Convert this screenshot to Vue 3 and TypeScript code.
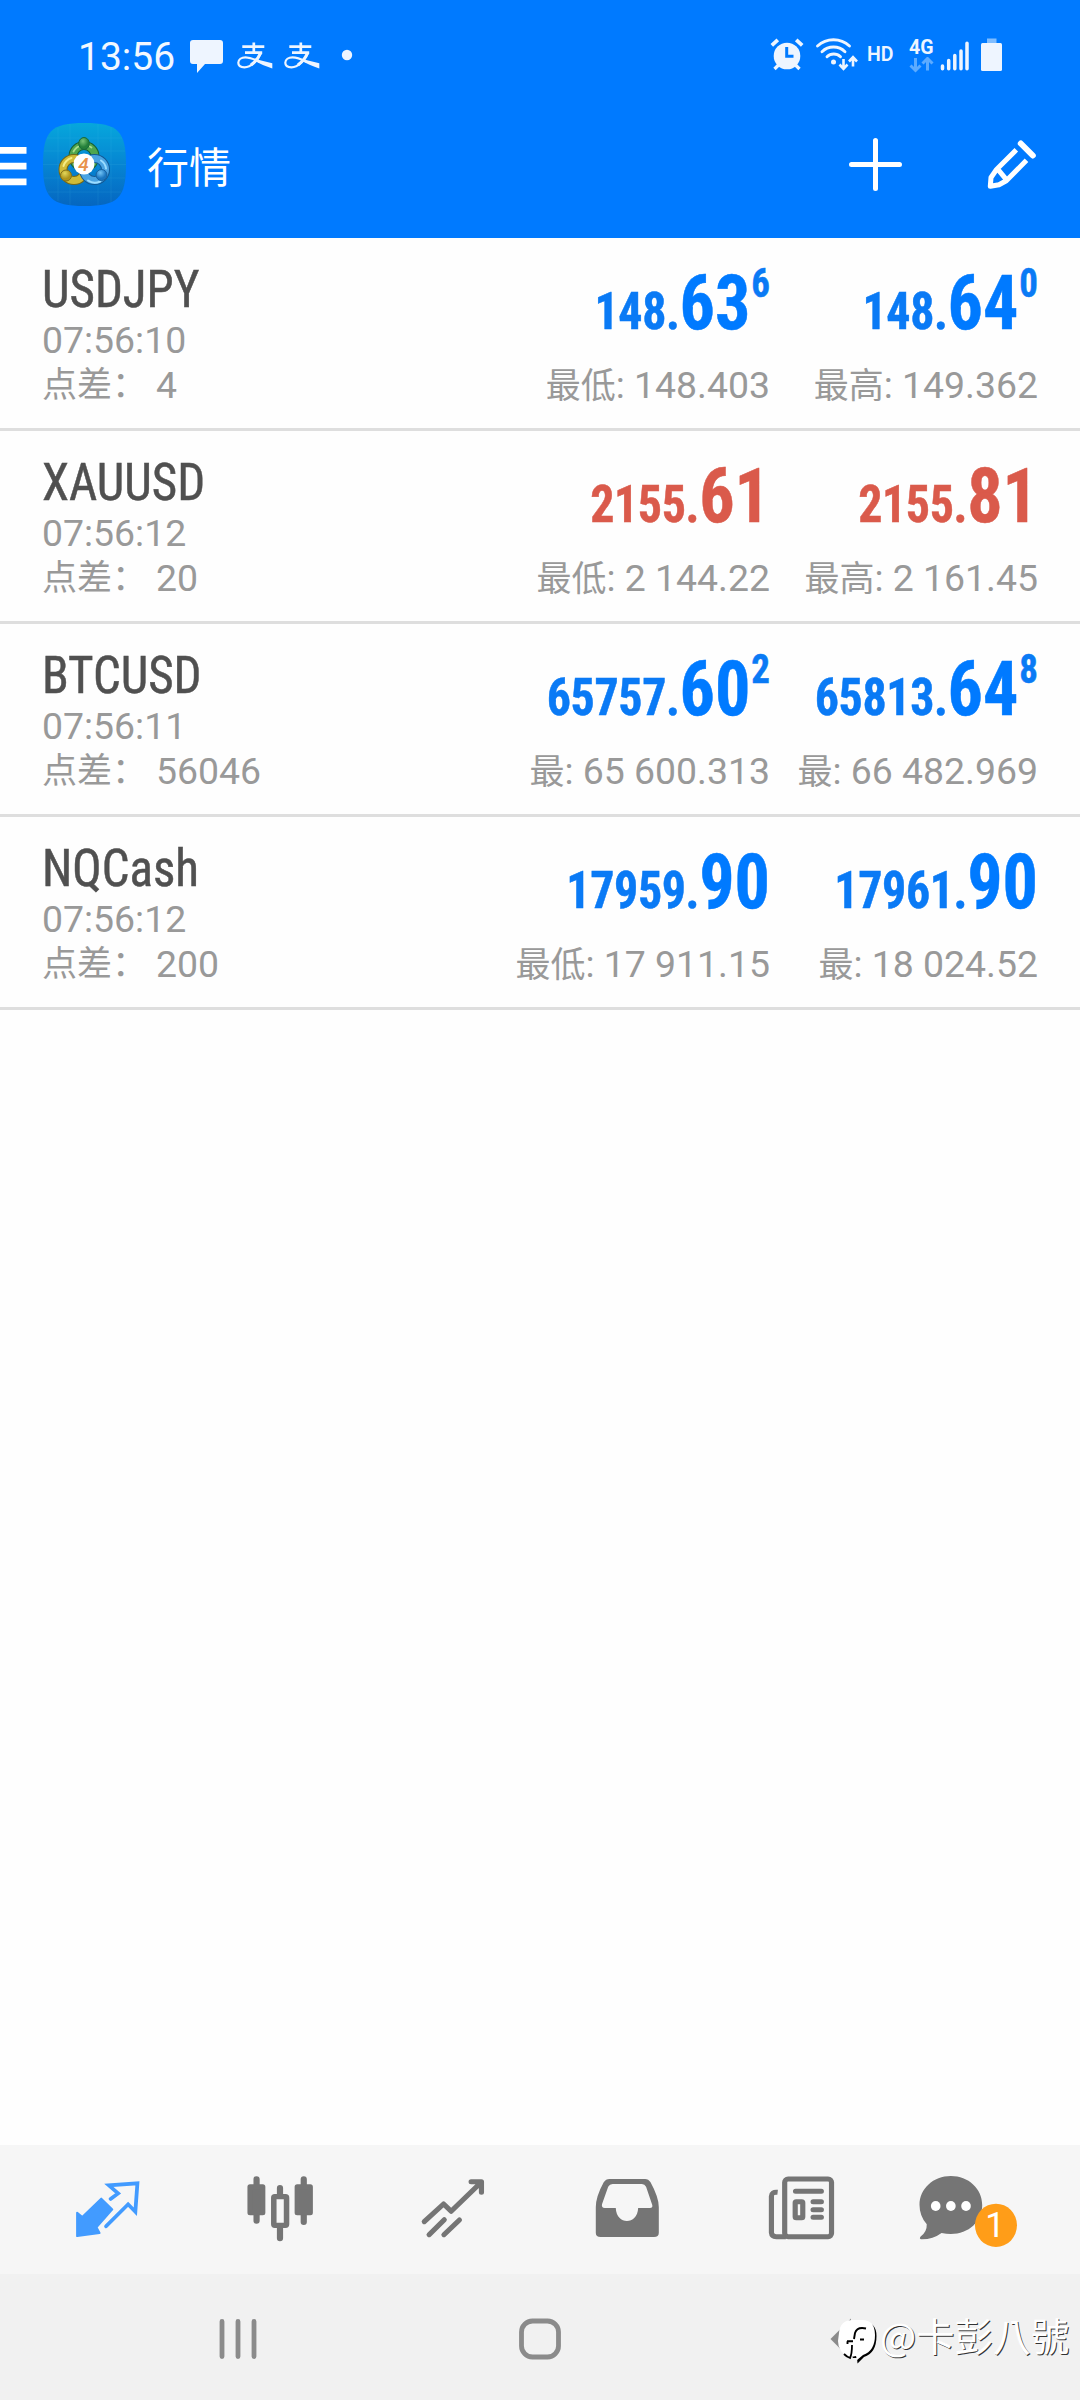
<script setup lang="ts">
interface Price {
  small: string
  big: string
  sup: string
  label: string
  extreme: string
}
interface Quote {
  symbol: string
  time: string
  spread: string
  trend: 'up' | 'down'
  prices: Price[]
}

const quotes: Quote[] = [
  {
    symbol: 'USDJPY', time: '07:56:10', spread: '4', trend: 'up',
    prices: [
      { small: '148.', big: '63', sup: '6', label: '最低', extreme: '148.403' },
      { small: '148.', big: '64', sup: '0', label: '最高', extreme: '149.362' },
    ],
  },
  {
    symbol: 'XAUUSD', time: '07:56:12', spread: '20', trend: 'down',
    prices: [
      { small: '2155.', big: '61', sup: '', label: '最低', extreme: '2 144.22' },
      { small: '2155.', big: '81', sup: '', label: '最高', extreme: '2 161.45' },
    ],
  },
  {
    symbol: 'BTCUSD', time: '07:56:11', spread: '56046', trend: 'up',
    prices: [
      { small: '65757.', big: '60', sup: '2', label: '最', extreme: '65 600.313' },
      { small: '65813.', big: '64', sup: '8', label: '最', extreme: '66 482.969' },
    ],
  },
  {
    symbol: 'NQCash', time: '07:56:12', spread: '200', trend: 'up',
    prices: [
      { small: '17959.', big: '90', sup: '', label: '最低', extreme: '17 911.15' },
      { small: '17961.', big: '90', sup: '', label: '最', extreme: '18 024.52' },
    ],
  },
]
</script>

<template>
  <div class="screen">
    <header>
      <div class="status">
        <div class="side">
          <span class="clock">13:56</span>
          <svg width="166" height="110" viewBox="188 0 166 110">
            <g fill="#eef5ff">
              <path d="M193 40h27q3 0 3 3v18q0 3-3 3h-15l-8 9v-9h-4q-3 0-3-3V43q0-3 3-3z" />
              <circle cx="347" cy="55" r="5.2" />
            </g>
            <g v-for="dx in [0, 47]" :key="dx" :transform="`translate(${dx} 0)`" fill="none" stroke="#eef5ff">
              <path d="M253.8 42.5v10.500M242.300 46.700h22M245 52.700h17.200" stroke-width="2.700" />
              <path d="M261 52.800C258 60 251 67.300 244.500 67.300C240 67.300 238.300 65 238.300 62.800C238.300 59.500 241.500 57.300 245.500 57.300C251 57.300 255 59.500 260 62" stroke-width="2.200" />
              <path d="M260.300 53.500C258.500 58 255 62 251 65" stroke-width="3.200" />
              <path d="M254 58.800L272.300 63.300V68.600C266 66.500 259 63.500 253.500 60z" fill="#eef5ff" stroke="none" />
            </g>
          </svg>
        </div>
        <div class="side">
          <svg width="92" height="110" viewBox="769 0 92 110" fill="none" stroke="#eef5ff">
            <circle cx="787" cy="56" r="13.300" fill="#eef5ff" stroke="none" />
            <path d="M771.800 45.300l6-5.500M802.200 45.300l-6-5.500" stroke-width="3.800" />
            <path d="M774.500 69l5-5M799.500 69l-5-5" stroke-width="3.300" />
            <path d="M786.700 47v9.300h6.800" stroke="#007aff" stroke-width="3" />
            <g stroke-width="2.900" stroke-linecap="round">
              <path d="M817.500 46a23.500 23.500 0 0 1 32 0M822 51.700a16.500 16.500 0 0 1 23 0M827 56.800a9.500 9.500 0 0 1 13.500 0" />
            </g>
            <circle cx="833.500" cy="62" r="2.500" fill="#eef5ff" stroke="none" />
            <path d="M843.500 59v9.500M839.500 64.500l4 4.300 4-4.300M853 66.500v-9M849 61.500l4-4.300 4 4.300" stroke-width="2.600" />
          </svg>
          <span class="hd">HD</span>
          <div class="network">
            <span>4G</span>
            <svg width="26" height="16" viewBox="908 57 26 16" fill="none" stroke="#5cabff" stroke-width="3">
              <path d="M915.500 58v12M910.500 65.500l5 5 5-5M927.500 70.500v-12M922.500 63.500l5-5 5 5" />
            </svg>
          </div>
          <svg width="66" height="110" viewBox="938 0 66 110">
            <path d="M942.500 66v2.700M948.700 60.500v8.200M954.800 55.500v13.200M961 51v17.700M967 43.200v25.500" stroke="#eef5ff" stroke-width="3.500" stroke-linecap="round" />
            <rect x="987" y="38.500" width="9.500" height="5" fill="#80bdff" />
            <rect x="981" y="43" width="21" height="28" rx="1.500" fill="#eef5ff" />
          </svg>
        </div>
      </div>
      <div class="appbar">
        <div class="side">
          <svg width="130" height="128" viewBox="0 110 130 128">
            <defs>
              <linearGradient id="tile" x1="0" y1="0" x2="0" y2="1">
                <stop offset="0" stop-color="#06a7dc" />
                <stop offset=".5" stop-color="#0685d2" />
                <stop offset="1" stop-color="#0566c0" />
              </linearGradient>
              <radialGradient id="green" cx=".4" cy=".3"><stop offset="0" stop-color="#79c477" /><stop offset="1" stop-color="#24803a" /></radialGradient>
              <radialGradient id="gold" cx=".4" cy=".3"><stop offset="0" stop-color="#e3d75a" /><stop offset="1" stop-color="#ad941d" /></radialGradient>
              <radialGradient id="sky" cx=".4" cy=".3"><stop offset="0" stop-color="#72c3f5" /><stop offset="1" stop-color="#1b76c0" /></radialGradient>
            </defs>
            <path d="M0 150.300h26.500M0 166.200h26.500M0 181.800h26.500" stroke="#fff" stroke-width="6.700" />
            <path d="M84.500 123C118 123 126 131 126 164.500S118 206 84.500 206S43 198 43 164.500S51 123 84.500 123z" fill="url(#tile)" />
            <path d="M58 128v73M70 124v81M98 124v81M111 127v75M47 138h75M44 151h81M43 164.500h83M44 178h81M48 192h73" stroke="#5fd0ee" stroke-width=".7" opacity=".15" />
            <g fill="none" stroke-linecap="round">
              <circle cx="84" cy="156.500" r="11" stroke="#175f34" stroke-width="9" />
              <circle cx="84" cy="156.500" r="11" stroke="#4fa64f" stroke-width="7" />
              <path d="M73.500 151.500a12 12 0 0 1 18-4" stroke="#a9dc8b" stroke-width="1.800" />
              <circle cx="74" cy="169.500" r="11" stroke="#756817" stroke-width="9" />
              <circle cx="74" cy="169.500" r="11" stroke="#d0bb38" stroke-width="7" />
              <path d="M63.500 166a12 12 0 0 1 8-8" stroke="#f4ec86" stroke-width="2" />
              <circle cx="94.500" cy="169.500" r="11" stroke="#135994" stroke-width="9" />
              <circle cx="94.500" cy="169.500" r="11" stroke="#4aa3e2" stroke-width="7" />
              <path d="M101 160.500a11 11 0 0 1 5 8M88 180.500a12 12 0 0 0 12 1" stroke="#9bdcff" stroke-width="2" />
            </g>
            <ellipse cx="84" cy="143.500" rx="5.300" ry="6" fill="url(#green)" stroke="#17693a" />
            <circle cx="66" cy="175.500" r="5.500" fill="url(#gold)" stroke="#81701a" />
            <circle cx="101.500" cy="175" r="5.500" fill="url(#sky)" stroke="#1862a0" />
            <circle cx="84" cy="164" r="10.500" fill="#fff" />
            <text x="83.500" y="170.500" text-anchor="middle" class="four">4</text>
          </svg>
          <h1>行情</h1>
        </div>
        <svg width="195" height="128" viewBox="845 110 195 128" fill="none" stroke="#fff">
          <path d="M875.500 140.500v48M851.500 164.500h48" stroke-width="5" stroke-linecap="round" />
          <path d="M1020.800 143.500l12 12" stroke-width="6" stroke-linecap="round" />
          <path d="M1016.300 149.800L996.500 169.500 991 177.500 990.300 186.300 999 184.800 1006.300 180.800 1026.500 160.300M997.500 168.800l9.500 11.500" stroke-width="5" stroke-linejoin="round" />
        </svg>
      </div>
    </header>

    <main>
      <section v-for="q in quotes" :key="q.symbol" class="quote">
        <div class="info">
          <div class="symbol">{{ q.symbol }}</div>
          <div class="time">{{ q.time }}</div>
          <div class="spread"><span class="spread-label">点差：</span>{{ q.spread }}</div>
        </div>
        <div v-for="(p, i) in q.prices" :key="i" class="side-price">
          <div class="price" :class="q.trend">
            <span class="small">{{ p.small }}</span>
            <span class="big">{{ p.big }}</span>
            <span v-if="p.sup" class="sup">{{ p.sup }}</span>
          </div>
          <div class="extreme"><span class="extreme-label">{{ p.label }}</span>: {{ p.extreme }}</div>
        </div>
      </section>
    </main>

    <nav class="tabs">
      <svg width="540" height="129" viewBox="0 2145 540 129">
        <g transform="translate(0 2130) scale(.34439 .33333)">
          <g fill="#429bff" stroke="#429bff" stroke-linejoin="round" stroke-linecap="round">
            <path d="M294 206L326 238L280 292L289 309L224 318V248L239 261z" stroke-width="6" />
            <path d="M321 207L343 190L316 166L399 160L393 245L372 223L308 289" fill="none" stroke-width="11" stroke-linejoin="miter" />
          </g>
          <g stroke="#757575" stroke-width="18" stroke-linecap="round" fill="none">
            <path d="M745 148v124M882 148v128M813 174v25M813 295v30" />
            <rect x="726" y="170" width="37" height="78" fill="#757575" stroke-width="15" stroke-linejoin="round" />
            <rect x="863" y="170" width="38" height="78" fill="#757575" stroke-width="15" stroke-linejoin="round" />
            <rect x="795" y="200" width="37" height="86" rx="3" stroke-width="16" fill="#f6f6f6" />
          </g>
          <path d="M1232 275L1288 222L1310 244L1398 156M1368 155H1398V187M1246 314L1290 269M1289 314L1334 270" fill="none" stroke="#757575" stroke-width="15" stroke-linecap="round" stroke-linejoin="round" />
        </g>
      </svg>
      <svg width="540" height="129" viewBox="540 2145 540 129">
        <g transform="translate(540 2130) scale(.34439 .33333)">
          <path fill-rule="evenodd" fill="#757575" d="M202 147H305Q315 147 321 157Q345 202 345 232V308Q345 321 331 321H176Q162 321 162 308V232Q162 200 185 157Q191 147 202 147zM211 162Q202 162 198 170L180 223Q178 234 188 234H220C222 286 283 286 285 234H319Q328 234 326 225L308 170Q304 162 296 162z" />
          <g fill="none" stroke="#757575" stroke-width="15">
            <rect x="710.500" y="147" width="136" height="173" rx="10" />
            <path d="M690 187Q672 185 672 199V308Q673 320 686 320H714" />
            <path d="M742 184H817M793 215H817M793 239H817M793 262H817" stroke-linecap="round" />
            <rect x="741" y="215" width="22" height="48" rx="3" />
          </g>
          <path d="M1193 138C1244 138 1284 176 1284 225C1284 274 1245 312 1193 312Q1180 312 1166 309Q1140 329 1106 328Q1100 326 1106 319Q1124 305 1123 283Q1102 258 1102 225C1102 176 1142 138 1193 138z" fill="#757575" />
          <g fill="#fff"><ellipse cx="1149" cy="228" rx="14" ry="15" /><ellipse cx="1193" cy="228" rx="14" ry="15" /><ellipse cx="1237" cy="228" rx="14" ry="15" /></g>
          <ellipse cx="1324" cy="286" rx="61" ry="65" fill="#ff9d18" />
        </g>
        <text x="995" y="2237" text-anchor="middle" class="badge">1</text>
      </svg>
    </nav>

    <footer>
      <svg width="880" height="126" viewBox="0 2274 880 126">
        <path d="M222 2321.500v35M238 2321.500v35M254 2321.500v35" stroke="#8b8b8b" stroke-width="4.800" stroke-linecap="round" />
        <rect x="521.500" y="2321" width="37" height="36" rx="11" fill="none" stroke="#8b8b8b" stroke-width="4.800" />
        <path d="M830.500 2339L851 2318.500V2359.500z" fill="#8b8b8b" />
        <path d="M840 2334Q842 2322 855 2322H863Q876.500 2322 876.500 2336Q876.500 2353 864 2357L857.500 2363.500L857 2358H853z" fill="#000" />
        <path d="M839 2333Q840 2320 853 2320H862Q875 2320 875 2335Q875 2351 863 2355L857 2360L856 2356Q852 2357 849 2357Q838 2352 838 2341z" fill="#fff" />
        <path d="M866 2328.500Q857 2326.500 855 2333Q854.500 2336 854 2339M847 2341.300H853M847.500 2341.300V2344M860 2339.500H864" fill="none" stroke="#000" stroke-width="1.900" />
        <path d="M852 2345Q852 2354 850 2358Q847 2357 844 2354" fill="none" stroke="#000" stroke-width="1.800" />
      </svg>
      <span class="author">@卡彭八號</span>
    </footer>
  </div>
</template>

<style>
body {
  margin: 0;
  background: #fff;
}
</style>

<style scoped>
.screen {
  width: 1080px;
  height: 2400px;
  display: flex;
  flex-direction: column;
  overflow: hidden;
  background: #fefefe;
  font-family: Roboto, "Noto Sans CJK SC", sans-serif;
}
svg { display: block; flex: none; }
header { height: 238px; flex: none; background: #007aff; color: #fff; }
.status { height: 110px; display: flex; justify-content: space-between; padding: 0 76px 0 78px; }
.side { display: flex; align-items: center; }
.clock { width: 110px; font-size: 39px; line-height: 46px; padding-top: 3px; color: #f2f8ff; }
.hd { width: 40px; padding-left: 6px; font-size: 19.500px; font-weight: 600; line-height: 24px; color: #eef5ff; box-sizing: border-box; }
.network { width: 37px; padding-left: 7px; box-sizing: border-box; font-size: 19.500px; font-weight: 700; color: #eef5ff; }
.network span { display: block; line-height: 18px; padding-left: 1px; margin-top: 2px; }
.appbar { height: 128px; display: flex; justify-content: space-between; padding-right: 40px; }
h1 { margin: -11px 0 0 17px; font-size: 42px; line-height: 56px; font-weight: 400; }
.four { font: italic 500 19px Roboto, sans-serif; fill: #e8924a; }

main { flex: 1; }
.quote { height: 193px; box-sizing: border-box; display: flex; padding: 0 42px; border-bottom: 3px solid #dedede; }
.info { flex: 1; padding-top: 21px; color: #999; font-size: 37.400px; white-space: nowrap; }
.symbol { font-family: "Roboto Condensed", Roboto, sans-serif; font-stretch: 75%; font-size: 52px; line-height: 62px; color: #505050; -webkit-text-stroke: .5px currentColor; transform: scaleX(.942); transform-origin: left; }
.time { line-height: 39px; }
.spread { display: flex; line-height: 51px; }
.spread-label { width: 114px; font-size: 35px; }
.side-price { width: 268px; display: flex; flex-direction: column; color: #999; font-size: 37.400px; white-space: nowrap; }
.price { height: 96px; margin-top: 27px; display: flex; justify-content: flex-end; align-items: baseline; font-family: "Roboto Condensed", Roboto, sans-serif; font-stretch: 75%; font-weight: 700; font-size: 52px; -webkit-text-stroke: .5px currentColor; transform: scaleX(.922); transform-origin: right; }
.small { letter-spacing: -.4px; }
.up { color: #0a7af5; }
.down { color: #da5a4b; }
.big { font-size: 76px; line-height: 76px; }
.up .big { color: #007aff; }
.sup { align-self: flex-start; font-size: 40px; line-height: 40px; margin-top: -1px; padding-left: 1px; }
.extreme { align-self: flex-end; line-height: 48px; }
.extreme-label { font-size: 35px; }

.tabs { height: 129px; flex: none; display: flex; background: #f6f6f6; }
.badge { font: 35px Roboto, sans-serif; fill: #fff; }
footer { height: 126px; flex: none; display: flex; align-items: center; background: #f1f1f1; }
.author { font-family: "Noto Sans CJK TC", sans-serif; font-size: 38.300px; line-height: 50px; margin-top: -5px; color: #fff; text-shadow: 1px 1px 0 #333; white-space: nowrap; }
</style>
